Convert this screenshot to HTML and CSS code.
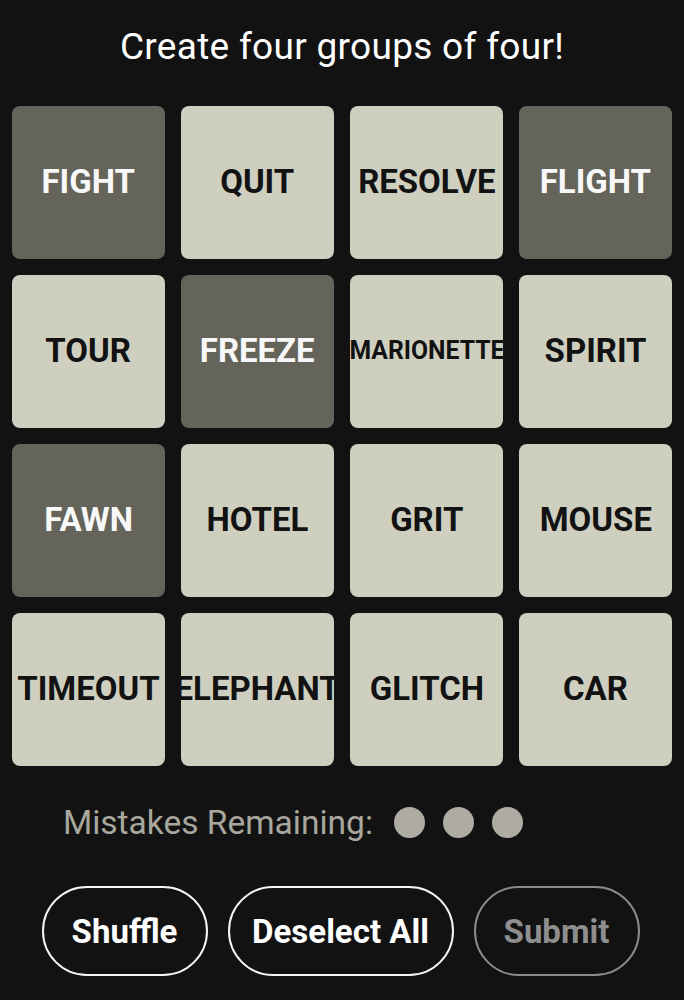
FILE: index.html
```html
<!DOCTYPE html>
<html lang="en">
<head>
<meta charset="utf-8">
<title>Connections</title>
<link rel="stylesheet" href="styles.css">
</head>
<body>
<main class="game">
  <h1 class="title">Create four groups of four!</h1>
  <div class="board">
    <div class="tile selected"><span>FIGHT</span></div>
    <div class="tile"><span>QUIT</span></div>
    <div class="tile"><span>RESOLVE</span></div>
    <div class="tile selected"><span>FLIGHT</span></div>
    <div class="tile"><span>TOUR</span></div>
    <div class="tile selected"><span>FREEZE</span></div>
    <div class="tile small"><span>MARIONETTE</span></div>
    <div class="tile"><span>SPIRIT</span></div>
    <div class="tile selected"><span>FAWN</span></div>
    <div class="tile"><span>HOTEL</span></div>
    <div class="tile"><span>GRIT</span></div>
    <div class="tile"><span>MOUSE</span></div>
    <div class="tile"><span>TIMEOUT</span></div>
    <div class="tile"><span>ELEPHANT</span></div>
    <div class="tile"><span>GLITCH</span></div>
    <div class="tile"><span>CAR</span></div>
  </div>
  <div class="mistakes">
    <span class="mistakes-label">Mistakes Remaining:</span>
    <span class="dots"><i class="dot"></i><i class="dot"></i><i class="dot"></i></span>
  </div>
  <div class="actions">
    <button class="btn btn-shuffle">Shuffle</button>
    <button class="btn btn-deselect">Deselect All</button>
    <button class="btn btn-submit" disabled>Submit</button>
  </div>
</main>
</body>
</html>
```
FILE: styles.css
```css
* { box-sizing: border-box; }
html, body {
  margin: 0;
  padding: 0;
  background: #121212;
}
body {
  font-family: Roboto, "Liberation Sans", Arial, sans-serif;
  color: #ffffff;
}
.game {
  width: 684px;
  padding: 0 12px;
}
.title {
  margin: 0;
  padding-top: 26px;
  height: 106px;
  font-weight: 400;
  font-size: 37px;
  line-height: 42px;
  text-align: center;
  letter-spacing: 0.3px;
}
.board {
  display: grid;
  grid-template-columns: repeat(4, 153px);
  grid-auto-rows: 153px;
  gap: 16px;
}
.tile {
  background: #cfcfc0;
  border-radius: 8px;
  display: flex;
  align-items: center;
  justify-content: center;
  color: #121212;
  font-weight: 700;
  font-size: 34px;
  white-space: nowrap;
  padding-bottom: 4px;
}
.tile span {
  display: inline-block;
  transform: scaleX(0.97);
}
.tile.small {
  font-size: 25.5px;
}
.tile.selected {
  background: #64645a;
  color: #f8f8f8;
}
.mistakes {
  display: flex;
  align-items: center;
  justify-content: center;
  margin-top: 36px;
  height: 40px;
  padding-right: 98px;
}
.mistakes-label {
  font-size: 33.5px;
  color: #a8a79e;
  margin-right: 21px;
}
.dots {
  display: flex;
  gap: 18px;
}
.dot {
  display: block;
  width: 31px;
  height: 31px;
  border-radius: 50%;
  background: #aeaba2;
}
.actions {
  display: flex;
  justify-content: center;
  gap: 20px;
  margin-top: 44px;
  padding-right: 3px;
}
.btn {
  height: 90px;
  border-radius: 45px;
  border: 2px solid #f4f4f4;
  background: transparent;
  color: #ffffff;
  font-family: Roboto, "Liberation Sans", Arial, sans-serif;
  font-weight: 700;
  font-size: 33px;
  padding: 0;
}
.btn-shuffle { width: 166px; }
.btn-deselect { width: 226px; }
.btn-submit {
  width: 166px;
  border-color: #8a8a8a;
  color: #8e8e8e;
}
```
